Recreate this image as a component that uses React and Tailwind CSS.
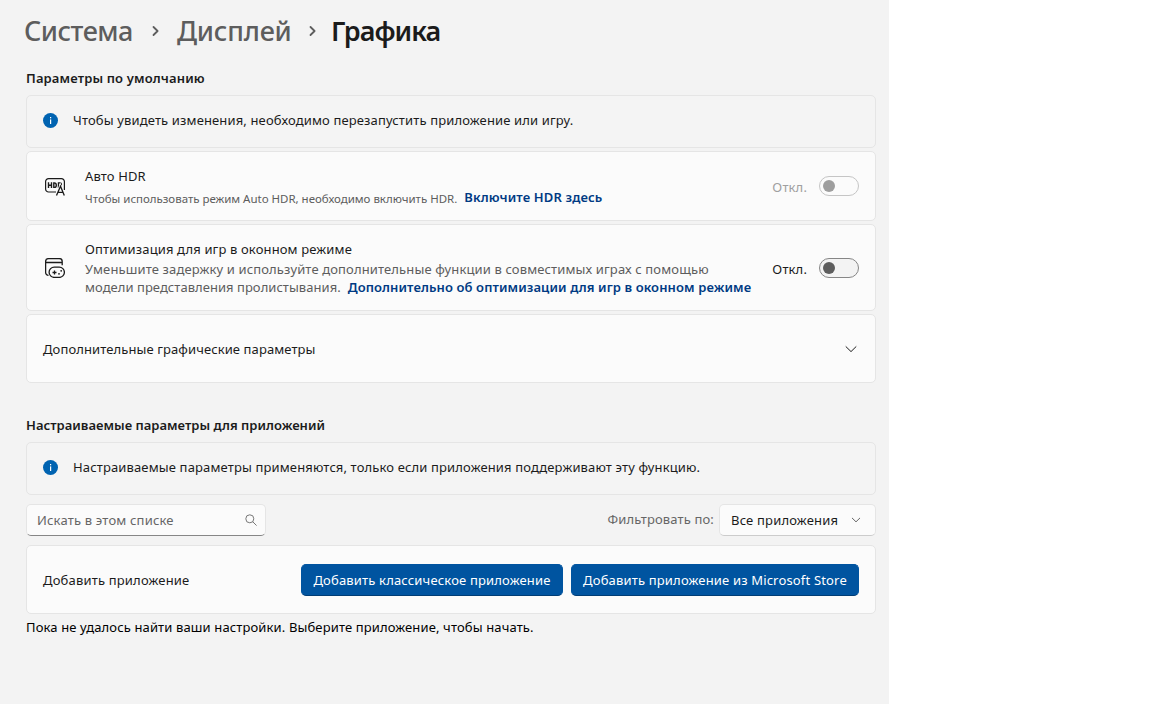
import React, { useState } from 'react';

const InfoBar = ({ children }) => (
  <div className="flex h-[53px] items-center rounded-[5px] border border-[#e5e5e5] bg-[#f4f4f4] pl-4 pb-[3px]">
    <svg width="15" height="15" viewBox="0 0 15 15" className="mr-[15px] shrink-0">
      <circle cx="7.5" cy="7.5" r="7.5" fill="#0063b1" />
      <rect x="7" y="4" width="1.2" height="1.3" fill="#fff" />
      <rect x="7" y="6.4" width="1.2" height="4.6" fill="#fff" />
    </svg>
    {children}
  </div>
);

const Toggle = ({ disabled }) => {
  const [on, setOn] = useState(false);
  return (
    <div className={disabled ? 'flex items-center text-[#a0a0a0]' : 'flex items-center text-[#1b1b1b]'}>
      <span className="mr-3 pt-[2px] leading-[18px]">{on ? 'Вкл.' : 'Откл.'}</span>
      <button
        disabled={disabled}
        onClick={() => setOn(!on)}
        className={
          disabled
            ? 'flex h-5 w-10 items-center rounded-full border border-[#c5c5c5] px-[3px]'
            : 'flex h-5 w-10 items-center rounded-full border border-[#868686] bg-[#f3f3f3] px-[3px]'
        }
      >
        <span
          className={
            disabled
              ? 'h-3 w-3 rounded-full bg-[#9e9e9e]'
              : on
                ? 'ml-auto h-3 w-3 rounded-full bg-[#0054a0]'
                : 'h-3 w-3 rounded-full bg-[#5d5d5d]'
          }
        />
      </button>
    </div>
  );
};

const Chevron = ({ className, d, size, weight = 1 }) => (
  <svg
    width={size}
    height={size}
    viewBox="0 0 12 12"
    fill="none"
    stroke="currentColor"
    strokeWidth={weight}
    className={className}
  >
    <path d={d} strokeLinecap="round" strokeLinejoin="round" />
  </svg>
);

const HdrIcon = () => (
  <svg width="20" height="20" viewBox="0 0 20 20" fill="none" stroke="#1b1b1b" strokeWidth="1.2" className="mt-1">
    <path d="M11 14H3.600a3 3 0 0 1-3-3V3.600a3 3 0 0 1 3-3h12.800a3 3 0 0 1 3 3V12" />
    <path d="M3.500 4.200v5.800M6.500 4.200v5.800M3.500 7.200h3M8.800 4.900v4.500h.6c1.500 0 1.900-.8 1.900-2.200S10.900 4.900 9.400 4.900zM13.500 10V4.900h1.400c2 0 2 2.700 0 2.700h-1.400" strokeWidth="1.400" />
    <path d="M11.500 17.800 15.300 8l3.900 9.800M13 14.500h5" stroke="#fbfbfb" strokeWidth="2.600" />
    <path d="M11.500 17.600 15.500 8.200l3.800 9.400M13 14.400h5" strokeWidth="1.300" />
  </svg>
);

const GameWindowIcon = () => (
  <svg width="20" height="20" viewBox="0 0 20 20" fill="none" stroke="#1b1b1b" strokeWidth="1.3">
    <path d="M3.500 17.400a2.900 2.900 0 0 1-2.900-2.900V3.500A2.900 2.900 0 0 1 3.500.6h10.800a2.900 2.900 0 0 1 2.900 2.900v3.700M.6 4.500h16.600" />
    <rect x="4.100" y="9.100" width="15.300" height="10.300" rx="5.100" />
    <path d="M9.500 12.500v4M7.500 14.500h4" />
    <circle cx="16.200" cy="12.800" r=".9" fill="#1b1b1b" stroke="none" />
    <circle cx="14" cy="15.800" r=".9" fill="#1b1b1b" stroke="none" />
  </svg>
);

const App = () => {
  const [query, setQuery] = useState('');

  return (
    <div className="h-[704px] bg-white font-['Noto_Sans','Open_Sans',sans-serif] text-[13px] leading-[18px] tracking-[0.14px] text-[#1b1b1b]">
      <div className="h-full w-[889px] bg-[#f3f3f3] pr-[13px] pl-[26px]">
        <h1 className="-ml-[2px] flex h-[62px] items-center text-[27px] leading-9 font-medium tracking-[-0.4px] whitespace-nowrap text-[#5d5d5d]">
          <span className="w-[107px] tracking-[-0.5px]">Система</span>
          <Chevron size={12} weight={1.800} className="mr-[15px] ml-[19px]" d="M3.500 2 7.600 6l-4.100 4" />
          <span className="w-[114px] tracking-[-0.2px]">Дисплей</span>
          <Chevron size={12} weight={1.800} className="mr-[13px] ml-[15px]" d="M4.500 2 8.600 6l-4.100 4" />
          <span className="font-semibold tracking-[-1px] text-[#1b1b1b]">Графика</span>
        </h1>

        <h2 className="h-[33px] pt-[7px] font-semibold">
          <span>Параметры по умолчанию</span>
        </h2>
        <div className="flex flex-col gap-[3px]">
          <InfoBar>
            <span>Чтобы увидеть изменения, необходимо перезапустить приложение или игру.</span>
          </InfoBar>

          <div className="flex h-[70px] items-center rounded-[5px] border border-[#e5e5e5] bg-[#fbfbfb] pr-4 pl-[18px]">
            <HdrIcon />
            <div className="ml-5 flex-1 whitespace-nowrap">
              <div><span>Авто HDR</span></div>
              <div className="mt-[3px] flex h-[18px]">
                <span className="pt-[2px] text-[11.5px] tracking-[-0.02px] text-[#5d5d5d]">Чтобы использовать режим Auto HDR, необходимо включить HDR.</span>
                <a className="ml-[7px] font-semibold text-[#003a83]">Включите HDR здесь</a>
              </div>
            </div>
            <Toggle disabled />
          </div>

          <div className="flex h-[87px] items-center rounded-[5px] border border-[#e5e5e5] bg-[#fbfbfb] pr-4 pl-[18px]">
            <GameWindowIcon />
            <div className="ml-5 flex-1 whitespace-nowrap">
              <div><span>Оптимизация для игр в оконном режиме</span></div>
              <div className="mt-[2px] text-[#5d5d5d]">
                <span className="tracking-[0.13px]">Уменьшите задержку и используйте дополнительные функции в совместимых играх с помощью</span>
              </div>
              <div className="flex text-[#5d5d5d]">
                <span className="tracking-[0.04px]">модели представления пролистывания.</span>
                <a className="ml-[7px] font-semibold tracking-[0.1px] text-[#003a83]">Дополнительно об оптимизации для игр в оконном режиме</a>
              </div>
            </div>
            <Toggle />
          </div>

          <div className="flex h-[69px] items-center justify-between rounded-[5px] border border-[#e5e5e5] bg-[#fbfbfb] pr-[18px] pl-4">
            <span className="tracking-[0.1px]">Дополнительные графические параметры</span>
            <Chevron size={12} d="M1 3.700 6 8.600l5-4.900" />
          </div>
        </div>

        <h2 className="mt-[26px] h-[33px] pt-[7px] font-semibold tracking-[0.02px]">
          <span>Настраиваемые параметры для приложений</span>
        </h2>
        <InfoBar>
          <span>Настраиваемые параметры применяются, только если приложения поддерживают эту функцию.</span>
        </InfoBar>

        <div className="mt-[9px] flex h-8 items-center justify-between">
          <div className="flex h-8 w-[240px] items-center rounded-[5px] border border-[#e5e5e5] border-b-[#868686] bg-[#fbfbfb] pr-2 pl-[10px]">
            <input
              value={query}
              onChange={(e) => setQuery(e.target.value)}
              placeholder="Искать в этом списке"
              className="min-w-0 flex-1 tracking-[0.18px] outline-none placeholder:text-[#666666]"
            />
            <svg width="12" height="12" viewBox="0 0 12 12" fill="none" stroke="#777777">
              <circle cx="4.800" cy="4.800" r="4" />
              <path d="m7.800 7.800 3.500 3.500" strokeLinecap="round" />
            </svg>
          </div>
          <div className="flex items-center">
            <span className="mr-[5px] pb-[2px] text-[#666666]">Фильтровать по:</span>
            <button className="flex h-8 w-[157px] items-center justify-between rounded-[5px] border border-[#e5e5e5] border-b-[#cccccc] bg-[#fbfbfb] pr-[14px] pl-[11px]">
              <span className="tracking-[0.18px]">Все приложения</span>
              <Chevron size={10} weight={1.200} className="text-[#666666]" d="M1.500 3.800 6 8.200l4.500-4.400" />
            </button>
          </div>
        </div>

        <div className="mt-[9px] flex h-[69px] items-center rounded-[5px] border border-[#e5e5e5] bg-[#fbfbfb] pr-4 pl-4">
          <span className="flex-1 tracking-[0.18px]">Добавить приложение</span>
          <button className="mr-2 h-8 w-[262px] rounded-[5px] border border-[#0054a0] border-b-[#003d75] bg-[#0054a0] whitespace-nowrap text-white">
            <span className="tracking-[0.17px]">Добавить классическое приложение</span>
          </button>
          <button className="h-8 w-[288px] rounded-[5px] border border-[#0054a0] border-b-[#003d75] bg-[#0054a0] whitespace-nowrap text-white">
            <span className="tracking-[0.17px]">Добавить приложение из Microsoft Store</span>
          </button>
        </div>
        <p className="pt-1 tracking-[0.13px] text-black">
          <span>Пока не удалось найти ваши настройки. Выберите приложение, чтобы начать.</span>
        </p>
      </div>
    </div>
  );
};

export default App;
